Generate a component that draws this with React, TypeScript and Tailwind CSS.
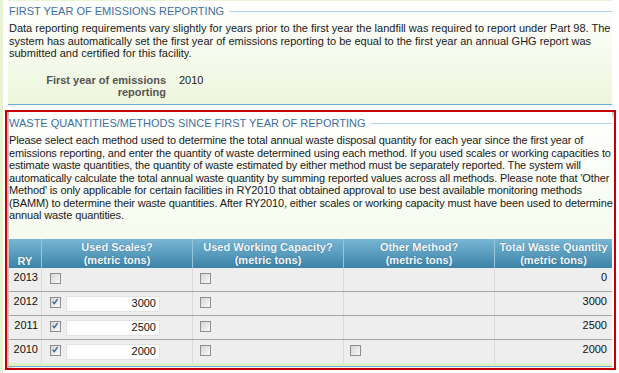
import React from "react";

const Check = ({ checked }: { checked?: boolean }) => (
  <span className="relative inline-block w-[11px] h-[11px] border border-[#8e8e8e] bg-gradient-to-br from-[#d6d6d6] to-[#fafafa] shrink-0">
    {checked && (
      <svg viewBox="0 0 11 11" className="absolute left-0 top-0 w-[9px] h-[9px]">
        <path d="M2 4.5 L4 7 L8 1.5" fill="none" stroke="#3b5a9a" strokeWidth="1.6" />
      </svg>
    )}
  </span>
);

const rows = [
  { ry: "2013", scales: false, val: "", other: false, total: "0" },
  { ry: "2012", scales: true, val: "3000", other: false, total: "3000" },
  { ry: "2011", scales: true, val: "2500", other: false, total: "2500" },
  { ry: "2010", scales: true, val: "2000", other: true, total: "2000" },
];

const Legend = ({ text }: { text: string }) => (
  <div className="flex items-center h-[22px]">
    <span className="text-[#3d6f9d] uppercase whitespace-nowrap">{text}</span>
    <div className="flex-1 h-px bg-[#a9d3ec] ml-[5px]" />
  </div>
);

const para2 = [
  "Please select each method used to determine the total annual waste disposal quantity for each year since the first year of",
  "emissions reporting, and enter the quantity of waste determined using each method. If you used scales or working capacities to",
  "estimate waste quantities, the quantity of waste estimated by either method must be separately reported. The system will",
  "automatically calculate the total annual waste quantity by summing reported values across all methods. Please note that 'Other",
  "Method' is only applicable for certain facilities in RY2010 that obtained approval to use best available monitoring methods",
  "(BAMM) to determine their waste quantities. After RY2010, either scales or working capacity must have been used to determine",
  "annual waste quantities.",
];

export default function App() {
  return (
    <div
      className="w-[619px] h-[373px] bg-white overflow-hidden border-l-[3px] border-[#e6f2d2] text-[11px] leading-[12.5px] text-[#1a1a1a]"
      style={{ fontFamily: '"Liberation Sans", Arial, sans-serif' }}
    >
      <div className="ml-[5px] mr-[7px] pl-[1px] bg-gradient-to-b from-white to-[#edf6dc] border-b border-[#6aaacd] h-[105px] border-t border-t-[#eaf4d8]">
        <div className="-mt-px">
          <Legend text="First Year of Emissions Reporting" />
        </div>
        <p>
          Data reporting requirements vary slightly for years prior to the first year the landfill was required to report under Part 98. The
          system has automatically set the first year of emissions reporting to be equal to the first year an annual GHG report was
          submitted and certified for this facility.
        </p>
        <div className="flex mt-[14px]">
          <div className="w-[157px] text-right font-bold text-[#555555]">
            First year of emissions
            <br />
            reporting
          </div>
          <div className="ml-[13px] text-[#222]">2010</div>
        </div>
      </div>

      <div className="ml-[2px] mr-[3px] mt-[5px] h-[260px] border-2 border-[#c40000] shadow-[inset_3px_3px_5px_rgba(0,0,0,0.3)] px-[2px] pb-px">
        <div className="h-full bg-gradient-to-b from-white to-[#edf6dc] border-b border-[#6aaacd] flex flex-col">
          <Legend text="Waste Quantities/Methods Since First Year of Reporting" />
          <div className="tracking-[-0.13px]">
            {para2.map((l) => (
              <div key={l} className="whitespace-nowrap">
                {l}
              </div>
            ))}
          </div>
          <div className="mt-auto">
            <div className="grid grid-cols-[33px_151px_151px_151px_117px] h-[29px] bg-gradient-to-b from-[#78b6d4] to-[#3b83a7] text-[#f4f9fc] font-bold text-center [text-shadow:0_0_1px_rgba(0,40,80,0.5)]">
              <div className="flex items-end justify-center pb-[1px] border-r border-[#94c6de]">RY</div>
              <div className="pt-[2px] border-r border-[#94c6de]">Used Scales?<br />(metric tons)</div>
              <div className="pt-[2px] border-r border-[#94c6de]">Used Working Capacity?<br />(metric tons)</div>
              <div className="pt-[2px] border-r border-[#94c6de]">Other Method?<br />(metric tons)</div>
              <div className="pt-[2px]">Total Waste Quantity<br />(metric tons)</div>
            </div>
            {rows.map((r, i) => (
              <div
                key={r.ry}
                className={
                  i < 3
                    ? "grid grid-cols-[33px_151px_151px_151px_117px] h-[24px] bg-[#eeeeee] border-b border-[#a6a6a6] text-[#111]"
                    : "grid grid-cols-[33px_151px_151px_151px_117px] h-[23px] bg-[#eeeeee] text-[#111]"
                }
              >
                <div className="flex items-center justify-end pr-[3px] pb-[4px] border-r border-[#dadada]">{r.ry}</div>
                <div className="flex items-center pl-[8px] pb-[3px] border-r border-[#dadada]">
                  <Check checked={r.scales} />
                  {r.scales && (
                    <div className="ml-[5px] w-[94px] h-[16px] mt-[3px] bg-white border border-[#e2e2e2] rounded-[2px] flex items-center justify-end pr-[3px]">
                      {r.val}
                    </div>
                  )}
                </div>
                <div className="flex items-center pl-[7px] pb-[3px] border-r border-[#dadada]">
                  <Check />
                </div>
                <div className="flex items-center pl-[6px] pb-[3px] border-r border-[#dadada]">
                  {r.other && <Check />}
                </div>
                <div className="flex items-center justify-end pr-[5px] pb-[4px]">{r.total}</div>
              </div>
            ))}
            <div className="h-[3px] bg-[#e1f1c4]" />
          </div>
        </div>
      </div>
    </div>
  );
}
